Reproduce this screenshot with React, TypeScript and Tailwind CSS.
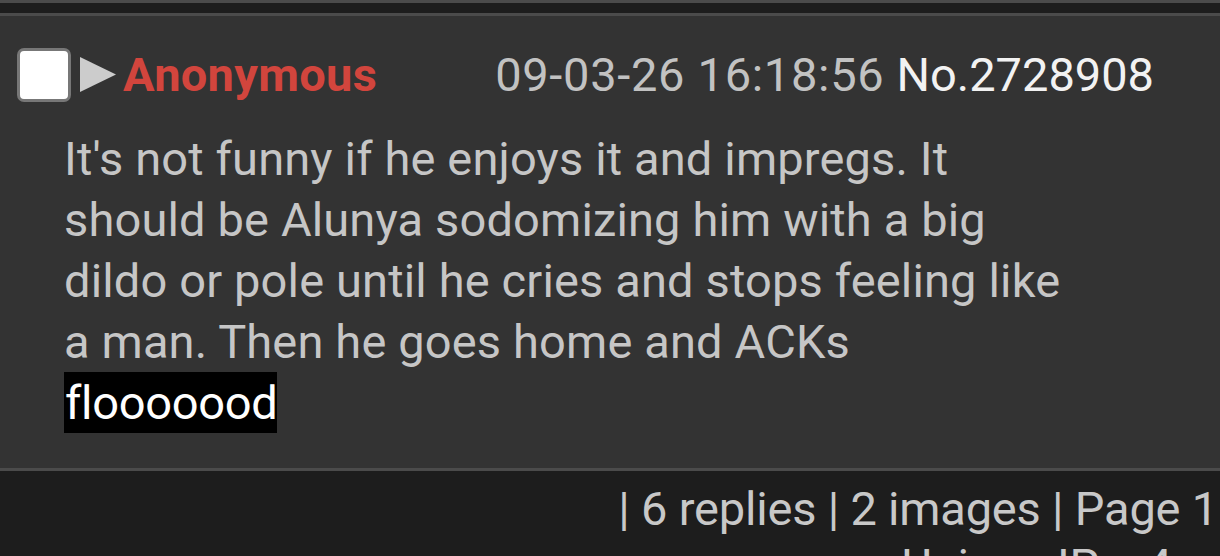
import React from "react";

export default function App() {
  return (
    <div
      className="w-[1220px] h-[556px] overflow-hidden bg-[#1d1d1d] flex flex-col"
      style={{ fontFamily: "Roboto, 'Noto Sans', sans-serif" }}
    >
      <div className="h-[3px] bg-[#4b4b4b] shrink-0" />
      <div className="h-[10px] bg-[#1d1d1d] shrink-0" />
      <div className="border-t-[3px] border-b-[3px] border-[#4b4b4b] bg-[#333333] pt-[28px] pb-[35px] shrink-0">
        <div className="flex items-center h-[61px] pl-[17px]">
          <div className="w-[54px] h-[54px] rounded-[7px] border-[3px] border-[#777777] bg-white shrink-0" />
          <svg width="36" height="35" viewBox="0 0 36 35" className="ml-[9px] shrink-0">
            <polygon points="0,0 36,17.5 0,35" fill="#cccccc" />
          </svg>
          <span className="ml-[7px] text-[47px] leading-[61px] font-bold text-[#d2453d] tracking-[0.3px]">Anonymous</span>
          <span className="ml-[118px] text-[47px] leading-[61px] text-[#c2c2c2] tracking-[0.7px]">09-03-26 16:18:56</span>
          <span className="ml-[12px] text-[47px] leading-[61px] text-[#f2f2f2]">No.2728908</span>
        </div>
        <div className="mt-[23px] pl-[64px] w-[1100px] text-[47px] leading-[61px] text-[#c6c6c6] tracking-[0.15px]">
          It's not funny if he enjoys it and impregs. It
          <br />
          should be Alunya sodomizing him with a big
          <br />
          dildo or pole until he cries and stops feeling like
          <br />
          a man. Then he goes home and ACKs
          <br />
          <span className="inline-block bg-black text-white pl-[1px] tracking-[-0.3px]">flooooood</span>
        </div>
      </div>
      <div className="pt-[9px] text-[47px] text-[#c8c8c8] shrink-0 tracking-[-0.2px]">
        <div className="leading-[57px] text-right pr-[2px] whitespace-nowrap">| 6 replies | 2 images | Page 1</div>
        <div className="leading-[57px] text-right pr-[48px] whitespace-nowrap">Unique IPs: 4</div>
      </div>
    </div>
  );
}
